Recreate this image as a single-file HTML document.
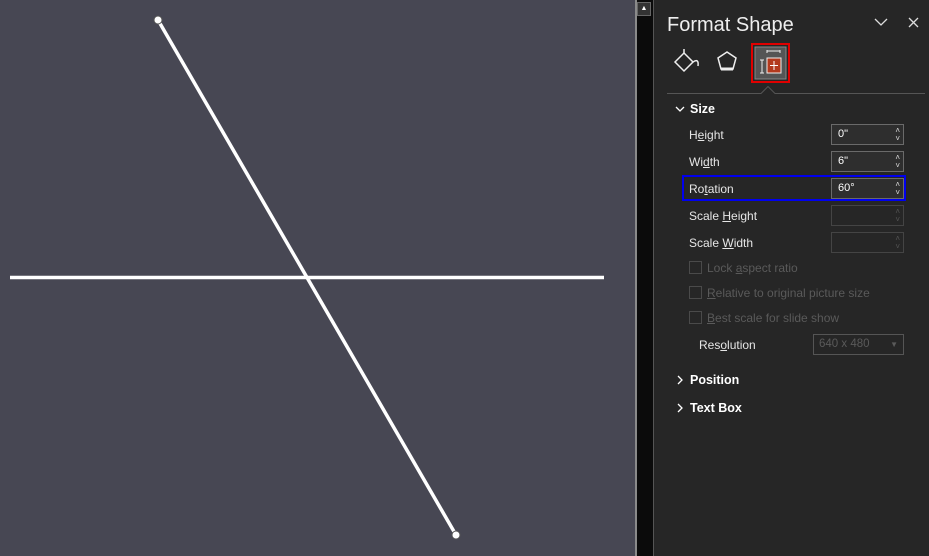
<!DOCTYPE html>
<html><head><style>
body{margin:0;width:929px;height:556px;overflow:hidden;background:#262626;font-family:"Liberation Sans",sans-serif;position:relative}
.a{position:absolute}
.lbl{position:absolute;left:689px;font-size:12px;color:#e6e6e6}
.sp{position:absolute;left:831px;width:71px;height:19px;border:1px solid #6a6a6a;background:#2e2e2e;color:#fff;font-size:11px;line-height:19px;text-indent:6px}
.sp.d{border-color:#444;background:#262626}
.ar{position:absolute;right:3px;font-size:8px;color:#ddd;line-height:8px;text-indent:0}
.cb{position:absolute;left:689px;width:11px;height:11px;border:1px solid #4a4a4a}
.dl{position:absolute;left:707px;font-size:12px;color:#5a5a5a}
.hd{position:absolute;font-size:12.5px;font-weight:bold;color:#fff}
</style></head><body>
<div class="a" style="left:0;top:0;width:635px;height:556px;background:#474753"></div>
<div class="a" style="left:635px;top:0;width:2px;height:556px;background:#8a8a8a"></div>
<div class="a" style="left:637px;top:0;width:16px;height:556px;background:#0b0b0b"></div>
<div class="a" style="left:637px;top:2px;width:14px;height:14px;background:#333;border:1px solid #666;box-sizing:border-box;color:#fff;font-size:7px;text-align:center;line-height:12px">▲</div>
<div class="a" style="left:653px;top:0;width:1px;height:556px;background:#555"></div>
<svg class="a" style="left:0;top:0" width="635" height="556">
<line x1="10" y1="277.5" x2="604" y2="277.5" stroke="#fff" stroke-width="3.5"/>
<line x1="158" y1="20" x2="456" y2="535" stroke="#fff" stroke-width="3.5"/>
<circle cx="158" cy="20" r="4" fill="#fff" stroke="#555" stroke-width="1"/>
<circle cx="456" cy="535" r="4" fill="#fff" stroke="#555" stroke-width="1"/>
</svg>
<div class="a" style="left:667px;top:14px;font-size:20px;color:#eee">Format Shape</div>
<svg class="a" style="left:870px;top:14px" width="55" height="18"><path d="M5 5l6 6 6-6" stroke="#ddd" fill="none" stroke-width="1.3"/><path d="M39 4l9 9M48 4l-9 9" stroke="#ddd" stroke-width="1.3"/></svg>
<svg class="a" style="left:667px;top:40px" width="130" height="60">
<path d="M8 22l9-9 9 9-9 9z" stroke="#eee" fill="none" stroke-width="1.5"/><path d="M17 13v-4M26 22q6-4 5 4" stroke="#eee" fill="none" stroke-width="1.5"/>
<path d="M60 12l9 6-3 11h-12l-3-11z" stroke="#eee" fill="none" stroke-width="1.5"/><path d="M54 29h12" stroke="#eee" stroke-width="3"/>
<rect x="85" y="4" width="37" height="38" fill="none" stroke="#e00000" stroke-width="2"/>
<rect x="88" y="7" width="31" height="32" fill="#555" stroke="#888"/>
<path d="M93 20h4M95 20v13M93 33h4M100 13v-3M100 11h13M113 13v-3" stroke="#eee" fill="none"/>
<rect x="100" y="18" width="14" height="15" fill="#b33a1e" stroke="#eee"/>
<path d="M107 21v9M103 25.5h8" stroke="#fff"/>
</svg>
<svg class="a" style="left:667px;top:86px" width="258" height="10"><path d="M0 7.5h94l7-7 7 7h150" stroke="#555" fill="none"/></svg>
<svg class="a" style="left:674px;top:104px" width="12" height="12"><path d="M2 3l4 4 4-4" stroke="#fff" fill="none" stroke-width="1.3"/></svg>
<div class="hd" style="left:690px;top:102px">Size</div>
<div class="lbl" style="top:128px">H<u>e</u>ight</div>
<div class="sp" style="top:124px">0"<span class="ar" style="top:2px">˄</span><span class="ar" style="top:10px">˅</span></div>
<div class="lbl" style="top:155px">Wi<u>d</u>th</div>
<div class="sp" style="top:151px">6"<span class="ar" style="top:2px">˄</span><span class="ar" style="top:10px">˅</span></div>
<div class="a" style="left:682px;top:175px;width:220px;height:22px;border:2px solid #0000ee"></div>
<div class="lbl" style="top:182px">Ro<u>t</u>ation</div>
<div class="sp" style="top:178px">60°<span class="ar" style="top:2px">˄</span><span class="ar" style="top:10px">˅</span></div>
<div class="lbl" style="top:209px">Scale <u>H</u>eight</div>
<div class="sp d" style="top:205px"><span class="ar" style="top:2px;color:#555">˄</span><span class="ar" style="top:10px;color:#555">˅</span></div>
<div class="lbl" style="top:236px">Scale <u>W</u>idth</div>
<div class="sp d" style="top:232px"><span class="ar" style="top:2px;color:#555">˄</span><span class="ar" style="top:10px;color:#555">˅</span></div>
<div class="cb" style="top:261px"></div><div class="dl" style="top:261px">Lock <u>a</u>spect ratio</div>
<div class="cb" style="top:286px"></div><div class="dl" style="top:286px"><u>R</u>elative to original picture size</div>
<div class="cb" style="top:311px"></div><div class="dl" style="top:311px"><u>B</u>est scale for slide show</div>
<div class="lbl" style="left:699px;top:338px">Res<u>o</u>lution</div>
<div class="a" style="left:813px;top:334px;width:89px;height:19px;border:1px solid #555;color:#5a5a5a;font-size:11.5px;line-height:19px;text-indent:5px">640 x 480<span style="position:absolute;right:5px;font-size:8px">▼</span></div>
<svg class="a" style="left:674px;top:374px" width="12" height="12"><path d="M4 2l4 4-4 4" stroke="#fff" fill="none" stroke-width="1.3"/></svg>
<div class="hd" style="left:690px;top:373px">Position</div>
<svg class="a" style="left:674px;top:402px" width="12" height="12"><path d="M4 2l4 4-4 4" stroke="#fff" fill="none" stroke-width="1.3"/></svg>
<div class="hd" style="left:690px;top:401px">Text Box</div>
</body></html>
